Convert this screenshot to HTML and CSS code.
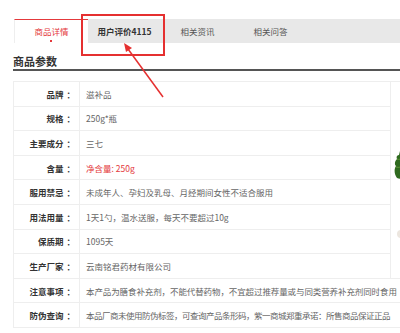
FILE: index.html
```html
<!DOCTYPE html>
<html lang="zh-CN">
<head>
    <meta charset="UTF-8">
    <meta name="viewport" content="width=device-width, initial-scale=1.0">
    <title>商品参数</title>
    <link rel="stylesheet" href="styles.css">
</head>
<body>
    <div class="page">
        <div class="tabs">
            <div class="tab active">商品详情</div>
            <div class="tab strong">用户评价4115</div>
            <div class="tab">相关资讯</div>
            <div class="tab">相关问答</div>
        </div>

        <h2 class="title">商品参数</h2>

        <div class="params">
            <div class="row"><div class="label">品牌<span class="colon">：</span></div><div class="value">滋补品</div></div>
            <div class="row"><div class="label">规格<span class="colon">：</span></div><div class="value">250g*瓶</div></div>
            <div class="row"><div class="label">主要成分<span class="colon">：</span></div><div class="value">三七</div></div>
            <div class="row"><div class="label">含量<span class="colon">：</span></div><div class="value red">净含量: 250g</div></div>
            <div class="row"><div class="label">服用禁忌<span class="colon">：</span></div><div class="value">未成年人、孕妇及乳母、月经期间女性不适合服用</div></div>
            <div class="row"><div class="label">用法用量<span class="colon">：</span></div><div class="value">1天1勺，温水送服，每天不要超过10g</div></div>
            <div class="row"><div class="label">保质期<span class="colon">：</span></div><div class="value">1095天</div></div>
            <div class="row"><div class="label">生产厂家<span class="colon">：</span></div><div class="value">云南铭君药材有限公司</div></div>
            <div class="row"><div class="label">注意事项<span class="colon">：</span></div><div class="value tight">本产品为膳食补充剂，不能代替药物，不宜超过推荐量或与同类营养补充剂同时食用</div></div>
            <div class="row"><div class="label">防伪查询<span class="colon">：</span></div><div class="value tighter">本品厂商未使用防伪标签，可查询产品条形码，紫一商城郑重承诺：所售商品保证正品</div></div>

            <div class="side-pic">
                <svg width="12" height="200" viewBox="0 0 12 200">
                    <path d="M9 69 L8 73 C6 73 5 75 6 77 C4 79 3 82 5 84 C3 87 3 92 6 96 C8 97 10 97 12 96 L12 68 Z" fill="#2f6a1f"/>
                    <path d="M6 77 C8 78 10 77 12 75 M5 85 C8 86 10 85 12 83" stroke="#6a9e3c" stroke-width="0.8" fill="none"/>
                    <circle cx="10" cy="152" r="4" fill="#ece6df"/>
                </svg>
            </div>
        </div>

        <svg class="mark" width="400" height="333" viewBox="0 0 400 333">
            <rect x="82" y="15" width="82" height="40" fill="none" stroke="#e53030" stroke-width="2"/>
            <line x1="163" y1="97" x2="128" y2="49" stroke="#e53030" stroke-width="1.5"/>
            <path d="M124 43 L132 48 L126 52 Z" fill="#e53030"/>
        </svg>
    </div>
</body>
</html>
```

FILE: styles.css
```css
body {
    margin: 0;
    background: #fff;
    font-family: "Noto Sans CJK SC", "Liberation Sans", sans-serif;
    font-size: 8.5px;
    color: #666;
}

.page {
    position: relative;
    width: 400px;
    height: 333px;
    overflow: hidden;
}

.tabs {
    display: flex;
    margin: 19px 0 0 14px;
    height: 24px;
    background: #e8e8e8;
}

.tab {
    width: 73px;
    text-align: center;
    line-height: 24px;
    color: #555;
}

.tab.strong {
    color: #333;
    font-weight: bold;
}

.tab.active {
    position: relative;
    background: #fff;
    border-top: 1px solid #e4393c;
    border-left: 1px solid #eee;
    line-height: 23px;
    color: #e4393c;
}

.tab.active::after {
    content: "";
    position: absolute;
    left: 35px;
    bottom: 1px;
    width: 2px;
    height: 2px;
    background: #e4393c;
}

.title {
    margin: 0 0 10px 13px;
    padding: 11px 0 1px;
    height: 14px;
    line-height: 14px;
    font-size: 11px;
    font-weight: bold;
    color: #333;
    border-bottom: 2px solid #555;
}

.params {
    position: relative;
    margin-left: 13px;
    border-top: 1px solid #eee;
    border-left: 1px solid #eee;
}

.row {
    display: flex;
    height: 23.6px;
    border-bottom: 1px solid #eee;
    align-items: center;
}

.label {
    flex-shrink: 0;
    width: 61px;
    padding-right: 4px;
    height: 100%;
    display: flex;
    align-items: center;
    justify-content: flex-end;
    border-right: 1px solid #eee;
    color: #333;
    font-weight: bold;
    white-space: nowrap;
}

.colon {
    padding-left: 3px;
}

.value {
    padding-left: 6px;
    white-space: nowrap;
}

.value.red {
    color: #e4393c;
}

.value.tight {
    letter-spacing: -0.1px;
}

.value.tighter {
    letter-spacing: -0.5px;
}

.side-pic {
    position: absolute;
    top: 0;
    left: 376px;
    width: 12px;
    height: 196px;
    background: #fff;
    border-left: 1px solid #eee;
    border-bottom: 1px solid #eee;
}

.mark {
    position: absolute;
    top: 0;
    left: 0;
}
```
